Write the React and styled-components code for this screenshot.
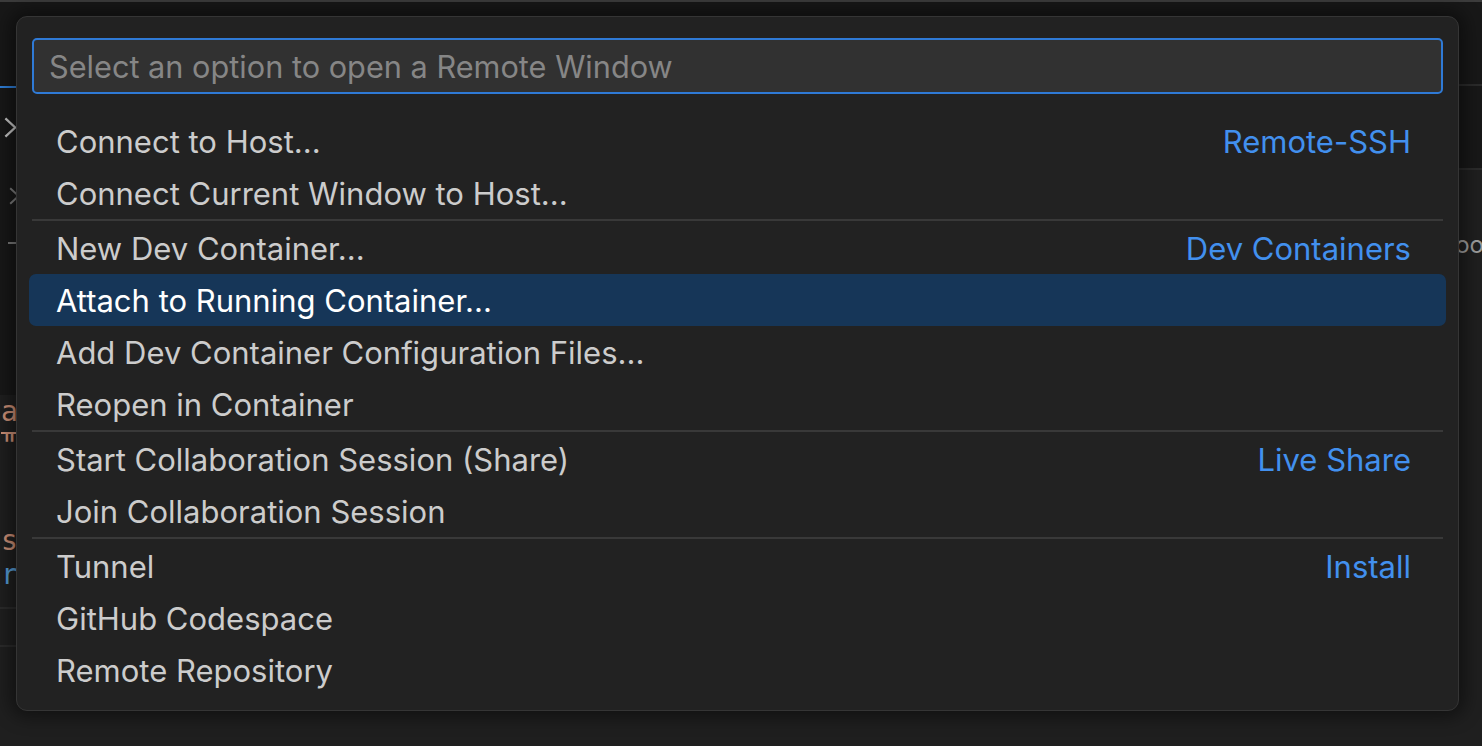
import React from 'react';
import styled, { createGlobalStyle } from 'styled-components';

const GlobalStyle = createGlobalStyle`
  html, body {
    margin: 0;
    padding: 0;
    background: #1f1f1f;
    overflow: hidden;
  }
  * {
    box-sizing: border-box;
  }
`;

const Workbench = styled.div`
  position: relative;
  width: 1482px;
  height: 746px;
  display: flex;
  background: #1f1f1f;
  font-family: Inter, "Noto Sans", sans-serif;
  overflow: hidden;
`;

const LeftPane = styled.div`
  width: 740px;
  display: flex;
  flex-direction: column;
`;

const RightPane = styled.div`
  flex: 1;
  display: flex;
  flex-direction: column;
  overflow: hidden;
`;

const TitleBar = styled.div`
  height: 88px;
  padding-top: 2px;
  background: #181818;
  display: flex;
  align-items: flex-end;
  border-top: 2px solid #3c3c3c;
`;

const Tab = styled.div`
  width: 220px;
  height: 100%;
  border-bottom: 2px solid ${p => (p.active ? '#2f7fd9' : 'transparent')};
`;

// explorer tree partly visible left of the dialog
const TreeList = styled.div`
  background: #181818;
  display: flex;
  flex-direction: column;
  padding-top: 10px;
  height: 307px;
`;

const TreeRow = styled.div`
  height: ${p => p.h || 60}px;
  flex-shrink: 0;
  display: flex;
  align-items: center;
  padding-left: ${p => p.indent || 4}px;
`;

const CodeArea = styled.div`
  flex: 1;
  display: flex;
  flex-direction: column;
`;

const CodeLine = styled.div`
  height: ${p => p.h || 34}px;
  font-family: "DejaVu Sans Mono", monospace;
  font-size: 28px;
  line-height: ${p => p.h || 34}px;
  padding-left: 1px;
  color: ${p => p.color || '#ce9178'};
  white-space: nowrap;
  span {
    padding-bottom: 4px;
    border-bottom: ${p => (p.underline ? '2px solid #ce9178' : 'none')};
  }
`;

const PanelStrip = styled.div`
  height: 40px;
  border-top: 2px solid #2b2b2b;
  border-bottom: 2px solid #2b2b2b;
  margin-top: 15px;
`;

const RightHeader = styled.div`
  height: 86px;
  background: #181818;
  border-top: 2px solid #3c3c3c;
  border-bottom: 2px solid #2b2b2b;
`;

const RightToolbar = styled.div`
  height: 84px;
  background: #181818;
  border-bottom: 2px solid #2b2b2b;
`;

const EditorText = styled.div`
  padding-top: 60px;
  padding-left: 707px;
  font-size: 24px;
  color: #9d9d9d;
  white-space: nowrap;
`;

const Overlay = styled.div`
  position: absolute;
  left: 16px;
  top: 16px;
  width: 1443px;
  height: 695px;
  background: #222222;
  border: 1px solid #353535;
  border-radius: 11px;
  box-shadow: 0 0 18px 6px rgba(0, 0, 0, 0.45);
  padding: 21px 14px 14px 14px;
  display: flex;
  flex-direction: column;
`;

const SearchBox = styled.div`
  height: 59px;
  margin: 0 1px 21px 1px;
  background: #313131;
  border: 2px solid #2f7ad6;
  border-radius: 5px;
  display: flex;
  align-items: center;
  padding-left: 15px;
  font-size: 30.7px;
  color: #868686;
  white-space: nowrap;
`;

const Group = styled.div`
  display: flex;
  flex-direction: column;
  border-top: ${p => (p.first ? 'none' : '2px solid #393939')};
  padding-top: ${p => (p.first ? 0 : 1)}px;
  margin: 0 1px;
`;

const Row = styled.div`
  height: 52px;
  margin: 0 -3px;
  padding: 0 35px 0 27px;
  display: flex;
  align-items: center;
  justify-content: space-between;
  border-radius: 7px;
  font-size: 31px;
  white-space: nowrap;
  background: ${p => (p.selected ? '#163658' : 'transparent')};
  color: ${p => (p.selected ? '#ffffff' : '#cccccc')};
`;

const Detail = styled.span`
  color: #4290ee;
`;

const Chevron = ({ color = '#c8c8c8', size = 14 }) => (
  <svg width={size} height={size * 1.5} viewBox="0 0 10 15" fill="none">
    <path d="M1 1l7 6.5L1 14" stroke={color} strokeWidth="1.6" />
  </svg>
);

const groups = [
  [
    { label: 'Connect to Host...', detail: 'Remote-SSH' },
    { label: 'Connect Current Window to Host...' },
  ],
  [
    { label: 'New Dev Container...', detail: 'Dev Containers' },
    { label: 'Attach to Running Container...', selected: true },
    { label: 'Add Dev Container Configuration Files...' },
    { label: 'Reopen in Container' },
  ],
  [
    { label: 'Start Collaboration Session (Share)', detail: 'Live Share' },
    { label: 'Join Collaboration Session' },
  ],
  [
    { label: 'Tunnel', detail: 'Install' },
    { label: 'GitHub Codespace' },
    { label: 'Remote Repository' },
  ],
];

export default function App() {
  return (
    <>
      <GlobalStyle />
      <Workbench>
        <LeftPane>
          <TitleBar>
            <Tab active />
          </TitleBar>
          <TreeList>
            <TreeRow h={58}><Chevron /></TreeRow>
            <TreeRow h={80} indent={9}><Chevron color="#7e7e7e" size={12} /></TreeRow>
            <TreeRow h={16} indent={8}>
              <svg width="10" height="4"><rect width="10" height="2" fill="#7a7a7a" /></svg>
            </TreeRow>
          </TreeList>
          <CodeArea>
            <CodeLine underline><span>a</span></CodeLine>
            <CodeLine>"</CodeLine>
            <CodeLine h={61} />
            <CodeLine>s</CodeLine>
            <CodeLine color="#569cd6">r</CodeLine>
            <PanelStrip />
          </CodeArea>
        </LeftPane>
        <RightPane>
          <RightHeader />
          <RightToolbar />
          <EditorText>foo:</EditorText>
        </RightPane>

        <Overlay>
          <SearchBox>Select an option to open a Remote Window</SearchBox>
          {groups.map((g, gi) => (
            <Group key={gi} first={gi === 0}>
              {g.map(item => (
                <Row key={item.label} selected={item.selected}>
                  <span>{item.label}</span>
                  {item.detail && <Detail>{item.detail}</Detail>}
                </Row>
              ))}
            </Group>
          ))}
        </Overlay>
      </Workbench>
    </>
  );
}
